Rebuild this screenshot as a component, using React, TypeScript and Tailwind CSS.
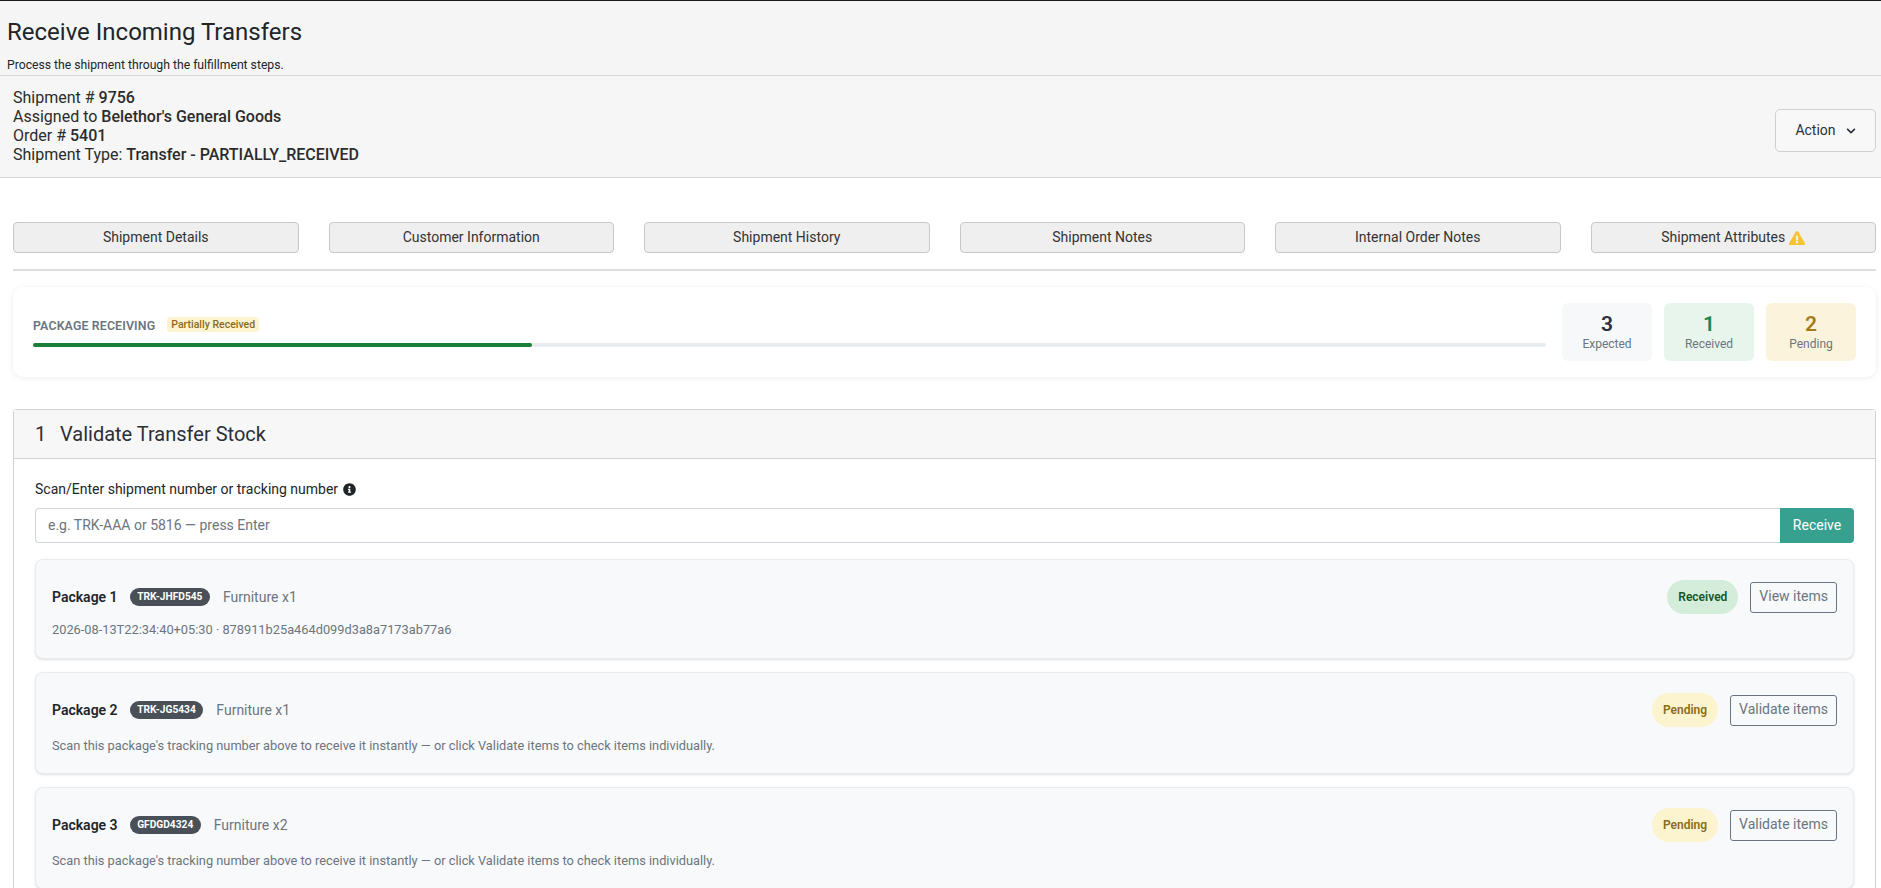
import { FaChevronDown, FaExclamationTriangle, FaInfoCircle } from 'react-icons/fa';

const tabs = ['Shipment Details', 'Customer Information', 'Shipment History', 'Shipment Notes', 'Internal Order Notes'];

const stats = [
  { value: 3, label: 'Expected', tile: 'bg-[#f6f8fa]', num: 'text-[#2b2f38]' },
  { value: 1, label: 'Received', tile: 'bg-[#e8f5ec]', num: 'text-[#198754]' },
  { value: 2, label: 'Pending', tile: 'bg-[#fbf3dc]', num: 'text-[#a67c1a]' },
];

const scanHint = "Scan this package's tracking number above to receive it instantly — or click Validate items to check items individually.";

const packages = [
  {
    name: 'Package 1',
    tracking: 'TRK-JHFD545',
    items: 'Furniture x1',
    note: '2026-08-13T22:34:40+05:30 · 878911b25a464d099d3a8a7173ab77a6',
    status: 'Received',
    action: 'View items',
    card: 'h-[100px]',
  },
  { name: 'Package 2', tracking: 'TRK-JG5434', items: 'Furniture x1', note: scanHint, status: 'Pending', action: 'Validate items', card: 'h-[102px]' },
  { name: 'Package 3', tracking: 'GFDGD4324', items: 'Furniture x2', note: scanHint, status: 'Pending', action: 'Validate items', card: 'h-[102px]' },
];

function PackageCard({ pkg }: { pkg: (typeof packages)[number] }) {
  const received = pkg.status === 'Received';
  return (
    <div className={`rounded-lg border border-[#e9ecef] bg-[#f8f9fb] px-[16px] pt-[20px] shadow-sm ${pkg.card}`}>
      <div className="flex h-[34px] items-center">
        <span className="text-[14px] font-semibold text-[#212529]">{pkg.name}</span>
        <span className="ml-[12px] rounded-full bg-[#495057] px-[7.5px] py-[2px] text-[10.2px] leading-[14px] font-bold text-white">{pkg.tracking}</span>
        <span className="ml-[13px] text-[14px] text-[#6c757d]">{pkg.items}</span>
        <span
          className={`ml-auto flex h-[34px] items-center rounded-full px-[11px] text-[12px] font-semibold ${
            received ? 'bg-[#d4edda] text-[#155724]' : 'bg-[#fcf3cf] text-[#8a6d1a]'
          }`}
        >
          {pkg.status}
        </span>
        <button className="ml-[12px] h-[31px] rounded-[3px] border border-[#6c757d] px-[8px] pb-[1px] text-[14px] text-[#6c757d]">{pkg.action}</button>
      </div>
      <p className={`text-[12.8px] leading-[18px] text-[#6c757d] ${received ? 'mt-[7px]' : 'mt-[10px]'}`}>{pkg.note}</p>
    </div>
  );
}

export default function App() {
  return (
    <div className="h-screen overflow-hidden border-t border-[#1a1a1a] bg-white font-['Roboto',sans-serif] text-[#212529]">
      <div className="h-[75px] border-b border-[#dcdcdc] bg-[#f5f5f5] px-[7px] pt-[15px]">
        <h1 className="text-[24px] leading-[32px] font-normal">Receive Incoming Transfers</h1>
        <p className="mt-[10px] text-[12.2px] leading-[14px]">Process the shipment through the fulfillment steps.</p>
      </div>

      <div className="flex h-[102px] items-center justify-between border-b border-[#d4d4d4] bg-[#f6f6f6] pr-[5px] pl-[13px]">
        <div className="mb-[2px] text-[16px] leading-[19px] text-[#2b2b2b]">
          <div>Shipment # <b className="font-medium">9756</b></div>
          <div>Assigned to <b className="font-medium">Belethor's General Goods</b></div>
          <div>Order # <b className="font-medium">5401</b></div>
          <div>Shipment Type: <b className="font-medium">Transfer - PARTIALLY_RECEIVED</b></div>
        </div>
        <button className="mt-[8px] flex h-[43px] w-[101px] items-center justify-center gap-[10px] rounded-[5px] border border-[#d0d0d0] bg-[#f8f8f8] text-[14px] text-[#2b2f38]">
          Action
          <FaChevronDown className="text-[10px]" />
        </button>
      </div>

      <div className="px-[13px] pr-[5px]">
        <div className="mt-[44px] grid grid-cols-6 gap-[30px]">
          {tabs.map((tab) => (
            <button key={tab} className="h-[31px] rounded-[4px] border border-[#c8c8c8] bg-[#efefef] text-[14px] text-[#333]">
              {tab}
            </button>
          ))}
          <button className="flex h-[31px] items-center justify-center gap-[4px] rounded-[4px] border border-[#c8c8c8] bg-[#efefef] text-[14px] text-[#333]">
            Shipment Attributes
            <FaExclamationTriangle className="text-[16px] text-[#f6c433]" />
          </button>
        </div>

        <div className="mt-[16px] h-[2px] bg-[#dedede]" />

        <div className="mt-[16px] flex h-[90px] items-center rounded-[10px] bg-white px-[20px] shadow-[0_1px_6px_rgba(0,0,0,0.08)]">
          <div className="flex-1">
            <div className="flex items-center">
              <span className="text-[12.4px] font-semibold tracking-[0.01em] text-[#6c757d]">PACKAGE RECEIVING</span>
              <span className="mb-[2px] ml-[12px] rounded-[4px] bg-[#fcf3cf] px-[4px] text-[10.5px] leading-[15px] font-medium text-[#8a6d1a]">Partially Received</span>
            </div>
            <div className="mt-[8px] h-[4px] rounded-full bg-[#e9ecef]">
              <div className="h-full w-[33%] rounded-full bg-[#198038]" />
            </div>
          </div>
          <div className="ml-[16px] flex gap-[12px]">
            {stats.map((s) => (
              <div key={s.label} className={`flex h-[58px] w-[90px] flex-col items-center justify-center rounded-[6px] ${s.tile}`}>
                <span className={`text-[21px] leading-[24px] font-semibold ${s.num}`}>{s.value}</span>
                <span className="text-[12px] leading-[16px] text-[#6c757d]">{s.label}</span>
              </div>
            ))}
          </div>
        </div>

        <div className="mt-[32px] rounded-t-[4px] border border-b-0 border-[#d2d2d2] pb-[40px]">
          <div className="flex h-[49px] items-center border-b border-[#d2d2d2] bg-[#f7f7f7] px-[21px] text-[20px] text-[#2b2f38]">
            <span className="w-[25px]">1</span>
            <span>Validate Transfer Stock</span>
          </div>
          <div className="px-[21px] pt-[22px]">
            <label className="flex items-center gap-[5px] text-[14px] leading-[17px]">
              Scan/Enter shipment number or tracking number
              <FaInfoCircle className="text-[13px] text-[#212529]" />
            </label>
            <div className="mt-[10px] flex h-[35px]">
              <input
                placeholder="e.g. TRK-AAA or 5816 — press Enter"
                className="min-w-0 flex-1 rounded-l-[4px] border border-r-0 border-[#ced4da] bg-white px-[12px] text-[14px] placeholder:text-[#6c757d] focus:outline-none"
              />
              <button className="w-[74px] rounded-r-[4px] bg-[#38a08f] text-[14px] text-white">Receive</button>
            </div>
            <div className="mt-[16px] flex flex-col gap-[13px]">
              {packages.map((pkg) => (
                <PackageCard key={pkg.name} pkg={pkg} />
              ))}
            </div>
          </div>
        </div>
      </div>
    </div>
  );
}
